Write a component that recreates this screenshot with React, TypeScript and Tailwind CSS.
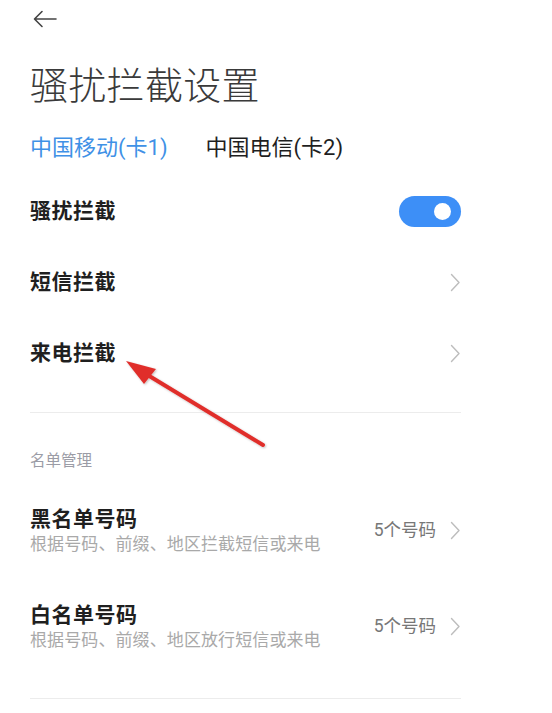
import React from 'react';

const font = { fontFamily: 'Roboto, "Noto Sans CJK SC", sans-serif' };

const Chevron = () => (
  <svg width="11" height="19" viewBox="0 0 11 19" className="shrink-0">
    <path d="M1.5 1.5 L9 9.5 L1.5 17.5" fill="none" stroke="#bdbdbd" strokeWidth="1.4" strokeLinecap="round" strokeLinejoin="round" />
  </svg>
);

const Toggle = () => (
  <div className="w-[62px] h-[31px] rounded-full bg-[#3d8ff7] flex items-center justify-end pr-[10px]">
    <span className="w-[17px] h-[17px] rounded-full bg-white" />
  </div>
);

const SimpleRow = ({ label, right }: { label: string; right: React.ReactNode }) => (
  <div className="h-[71px] flex items-center justify-between">
    <span className="text-[21px] font-semibold text-[#1f1f1f] tracking-[0.5px]">{label}</span>
    {right}
  </div>
);

const ListRow = ({ title, desc, count }: { title: string; desc: string; count: string }) => (
  <div className="flex items-center justify-between">
    <div className="flex flex-col">
      <span className="text-[21px] leading-[28px] font-bold text-[#1f1f1f] tracking-[0.5px]">{title}</span>
      <span className="text-[17px] leading-[22px] text-[#a9a9a9] tracking-[0.1px]">{desc}</span>
    </div>
    <div className="flex items-center gap-[14px]">
      <span className="text-[17.5px] text-[#777]">{count}</span>
      <Chevron />
    </div>
  </div>
);

export default function App() {
  return (
    <div className="relative w-[552px] h-[713px] bg-white overflow-hidden" style={font}>
      <div className="w-[431px] ml-[30px]">
        {/* header */}
        <div className="h-[38px] flex items-center pl-[3px]">
          <svg width="24" height="18" viewBox="0 0 24 18">
            <path d="M23 9 H2 M9 1.5 L1.5 9 L9 16.5" fill="none" stroke="#444" strokeWidth="1.6" strokeLinecap="round" strokeLinejoin="round" />
          </svg>
        </div>

        <h1 className="mt-[24px] h-[48px] leading-[48px] text-[38px] font-light text-[#3a3a3a] tracking-[0.3px]">骚扰拦截设置</h1>

        <div className="mt-[22px] h-[30px] flex items-center gap-[38px] text-[22px]">
          <span className="text-[#3f91e6]">中国移动(卡1)</span>
          <span className="text-[#1f1f1f]">中国电信(卡2)</span>
        </div>

        <div className="mt-[14px]">
          <SimpleRow label="骚扰拦截" right={<Toggle />} />
          <SimpleRow label="短信拦截" right={<Chevron />} />
          <SimpleRow label="来电拦截" right={<Chevron />} />
        </div>

        <div className="mt-[23px] h-px bg-[#ececec]" />

        <div className="mt-[38px] h-[20px] leading-[20px] text-[15.5px] text-[#9b9ca6]">名单管理</div>

        <div className="mt-[34px] flex flex-col gap-[46px]">
          <ListRow title="黑名单号码" desc="根据号码、前缀、地区拦截短信或来电" count="5个号码" />
          <ListRow title="白名单号码" desc="根据号码、前缀、地区放行短信或来电" count="5个号码" />
        </div>

        <div className="mt-[47px] h-px bg-[#ececec]" />
      </div>

      {/* annotation arrow */}
      <svg className="absolute inset-0 pointer-events-none" width="552" height="713" viewBox="0 0 552 713">
        <defs>
          <filter id="sh" x="-20%" y="-20%" width="140%" height="140%">
            <feDropShadow dx="1" dy="1" stdDeviation="1" floodColor="#000" floodOpacity="0.25" />
          </filter>
        </defs>
        <g filter="url(#sh)">
          <line x1="263" y1="445" x2="146" y2="374" stroke="#e02f2c" strokeWidth="4" strokeLinecap="round" />
          <polygon points="126,361 156,369 144,384" fill="#e02f2c" />
        </g>
      </svg>
    </div>
  );
}
